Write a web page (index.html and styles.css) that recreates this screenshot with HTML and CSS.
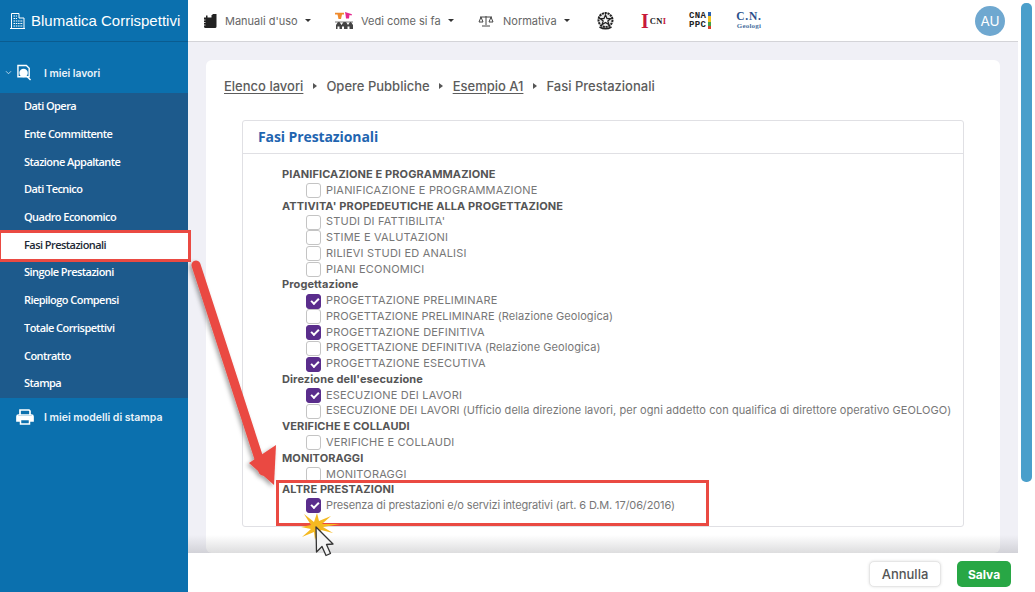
FILE: index.html
```html
<!DOCTYPE html>
<html lang="it">
<head>
<meta charset="utf-8">
<title>Blumatica Corrispettivi</title>
<link rel="stylesheet" href="styles.css">
</head>
<body>
<div class="app">
  <aside class="sidebar">
    <div class="brand">
      <svg class="brand-icon" viewBox="0 0 15 16" width="15" height="16"><path d="M1.500 15.500V.5H9v4.500h5v10.500M0 15.500h15" fill="none" stroke="#fff" stroke-width="1"/><path d="M3.500 3h3.500M3.500 5.500h3.500M3.500 8h9.500M3.500 10.500h9.500M3.500 13h9.500" stroke="#fff" stroke-width="1.200" stroke-dasharray="1.500 .8"/></svg>
      <span>Blumatica Corrispettivi</span>
    </div>
    <div class="nav-top">
      <svg class="chev" viewBox="0 0 8 6" width="7" height="5"><path d="M1 1.500l3 3 3-3" fill="none" stroke="#cfe3f1" stroke-width="1"/></svg>
      <svg class="nav-icon" viewBox="0 0 16 17" width="15" height="17"><path d="M1 1h9l3 3v9H1z" fill="none" stroke="#fff" stroke-width="1.500"/><circle cx="7" cy="9" r="4.500" fill="#fff"/><path d="M10.500 12.500l4 4" stroke="#fff" stroke-width="1.500"/></svg>
      <span>I miei lavori</span>
    </div>
    <nav class="submenu">
      <a>Dati Opera</a>
      <a>Ente Committente</a>
      <a>Stazione Appaltante</a>
      <a>Dati Tecnico</a>
      <a>Quadro Economico</a>
      <a class="active">Fasi Prestazionali</a>
      <a>Singole Prestazioni</a>
      <a>Riepilogo Compensi</a>
      <a>Totale Corrispettivi</a>
      <a>Contratto</a>
      <a>Stampa</a>
    </nav>
    <div class="nav-print">
      <svg viewBox="0 0 18 16" width="18" height="16"><path d="M4 6V1h9l1 1v4M4 12H1V7.500Q1 6 2.500 6h13Q17 6 17 7.500V12h-3" fill="none" stroke="#fff" stroke-width="1.700"/><path d="M1 7h16v5H1z" fill="#fff"/><path d="M4.500 10.500h9v4.500h-9z" fill="#0b70ae" stroke="#fff" stroke-width="1.500"/></svg>
      <span>I miei modelli di stampa</span>
    </div>
  </aside>

  <div class="main">
    <header class="topbar">
      <div class="menu m1">
        <svg viewBox="0 0 14 14" width="14" height="14"><path d="M1 3.500h2V1.500h1.500v2H8.500V1h1v-1L12.500 0H13.500v12.500Q13.500 14 12 14H2.500Q1 14 1 12.500z" fill="#222"/><path d="M.5 6h2M.5 8.500h2M.5 11h2" stroke="#fff" stroke-width=".8"/></svg>
        <span>Manuali d'uso</span><i class="caret"></i>
      </div>
      <div class="menu m2">
        <svg viewBox="0 0 18 17" width="18" height="17"><path d="M0 .8h9v1.700h-2L6 7H3.500L2.500 2.500H0z" fill="#ef8a2d"/><path d="M10 0l7 2.300-.5 1.200-2-.6-.5 3.600h-3L10.500 2.500z" fill="#e4288e"/><path d="M1 17v-4l2-3h1.500l2 3 2-3H11l2 3 2-3h1l2 3v4h-3.500v-2.500h-2V17H9v-2.500H7V17H4.500v-2.500h-2V17z" fill="#444"/><path d="M0 10h18" stroke="#555" stroke-width=".8"/></svg>
        <span>Vedi come si fa</span><i class="caret"></i>
      </div>
      <div class="menu m3">
        <svg viewBox="0 0 16 12" width="16" height="12"><path d="M8 1v9M4 11h8M2 2h12M3 2L1 7h4zM13 2l-2 5h4z" fill="none" stroke="#444" stroke-width="1"/></svg>
        <span>Normativa</span><i class="caret"></i>
      </div>
      <div class="logo emblem">
        <svg viewBox="0 0 17 18" width="17" height="18"><circle cx="8.500" cy="8" r="7" fill="#e6e6e6" stroke="#222" stroke-width="2" stroke-dasharray="2.200 .7"/><path d="M8.500 3l1.500 3.600h3.800l-3 2.300 1.100 3.700-3.400-2.200-3.400 2.200 1.100-3.700-3-2.300H7z" fill="#fff" stroke="#222" stroke-width="1.200"/><path d="M2.500 15q6 3.500 12 0" fill="none" stroke="#222" stroke-width="1.500"/></svg>
      </div>
      <div class="logo cni"><span class="cni-i">I</span><span class="cni-t">CN<em>I</em></span></div>
      <div class="logo cna"><span class="cna-t">CNA<br>PPC</span><span class="cna-bar"></span></div>
      <div class="logo cng"><span class="cng-a">C.N.</span><span class="cng-b">Geologi</span></div>
      <div class="avatar">AU</div>
    </header>

    <div class="content">
      <section class="card">
        <div class="crumbs">
          <a>Elenco lavori</a><i class="sep"></i><span>Opere Pubbliche</span><i class="sep"></i><a>Esempio A1</a><i class="sep"></i><span>Fasi Prestazionali</span>
        </div>
        <div class="panel">
          <h2 class="panel-title">Fasi Prestazionali</h2>
          <div class="panel-body">
            <div class="cat">PIANIFICAZIONE E PROGRAMMAZIONE</div>
            <label class="row caps"><i class="cb"></i>PIANIFICAZIONE E PROGRAMMAZIONE</label>
            <div class="cat">ATTIVITA' PROPEDEUTICHE ALLA PROGETTAZIONE</div>
            <label class="row caps"><i class="cb"></i>STUDI DI FATTIBILITA'</label>
            <label class="row caps"><i class="cb"></i>STIME E VALUTAZIONI</label>
            <label class="row caps"><i class="cb"></i>RILIEVI STUDI ED ANALISI</label>
            <label class="row caps"><i class="cb"></i>PIANI ECONOMICI</label>
            <div class="cat">Progettazione</div>
            <label class="row caps"><i class="cb on"></i>PROGETTAZIONE PRELIMINARE</label>
            <label class="row"><i class="cb"></i>PROGETTAZIONE PRELIMINARE (Relazione Geologica)</label>
            <label class="row caps"><i class="cb on"></i>PROGETTAZIONE DEFINITIVA</label>
            <label class="row"><i class="cb"></i>PROGETTAZIONE DEFINITIVA (Relazione Geologica)</label>
            <label class="row caps"><i class="cb on"></i>PROGETTAZIONE ESECUTIVA</label>
            <div class="cat">Direzione dell'esecuzione</div>
            <label class="row caps"><i class="cb on"></i>ESECUZIONE DEI LAVORI</label>
            <label class="row"><i class="cb"></i>ESECUZIONE DEI LAVORI (Ufficio della direzione lavori, per ogni addetto con qualifica di direttore operativo GEOLOGO)</label>
            <div class="cat">VERIFICHE E COLLAUDI</div>
            <label class="row caps"><i class="cb"></i>VERIFICHE E COLLAUDI</label>
            <div class="cat">MONITORAGGI</div>
            <label class="row caps"><i class="cb"></i>MONITORAGGI</label>
            <div class="cat">ALTRE PRESTAZIONI</div>
            <label class="row tight"><i class="cb on"></i>Presenza di prestazioni e/o servizi integrativi (art. 6 D.M. 17/06/2016)</label>
          </div>
        </div>
      </section>
      <div class="fade"></div>
    </div>

    <footer class="footer">
      <button class="btn cancel">Annulla</button>
      <button class="btn save">Salva</button>
    </footer>
  </div>

  <div class="scrollbar"><div class="thumb"></div></div>
</div>

<div class="mark mark-nav"></div>
<div class="mark mark-row"></div>
<svg class="overlay" viewBox="0 0 1035 592" width="1035" height="592">
  <defs><filter id="sh" x="-20%" y="-20%" width="140%" height="140%"><feDropShadow dx="-2" dy="2" stdDeviation="2" flood-color="#000" flood-opacity=".35"/></filter></defs>
  <g filter="url(#sh)">
    <path d="M196 265L263 471" stroke="#ea4a42" stroke-width="9" stroke-linecap="round" fill="none"/>
    <path d="M249 463L276 445 274 485z" fill="#ea4a42"/>
  </g>
  <path d="M304 514L314 522 317 513 319 521 331 516 322 524 340 524 323 527 333 533 321 530 323 540 318 531 315 540 314 532 302 537 311 529 301 527 311 525z" fill="#f5b921"/>
  <path d="M316 527l.5 25 5.500-5.500 4 9 4.500-2-4-9 6.500-.5z" fill="#f4f4f4" stroke="#333" stroke-width="1.300" stroke-linejoin="round"/>
</svg>
</body>
</html>
```

FILE: styles.css
```css
* { box-sizing: border-box; }
html, body { margin: 0; padding: 0; height: 592px; overflow: hidden; background: #fff; }
body { font-family: "Inter", "Open Sans", sans-serif; color: #555; position: relative; }

.app { display: flex; height: 592px; width: 1035px; }

.sidebar { width: 188px; flex: none; background: #0b70ae; color: #fff; display: flex; flex-direction: column; }
.brand { height: 42px; display: flex; align-items: center; gap: 6px; padding-left: 10px; border-bottom: 1px solid #0a5c90; font: 15px "Liberation Sans", Arial, sans-serif; white-space: nowrap; }
.nav-top { height: 51px; display: flex; align-items: center; padding: 10px 0 0 5px; font: 600 10.300px "Inter", sans-serif; color: #eaf3f9; }
.chev { margin-right: 5px; }
.nav-icon { margin-right: 12px; }
.submenu { background: #1d5a8c; display: flex; flex-direction: column; }
.submenu a { height: 27.700px; display: flex; align-items: center; padding: 0 0 2px 24px; font: 600 11px "Open Sans", sans-serif; letter-spacing: -.55px; color: #fff; }
.submenu a.active { background: #fff; color: #1e2a36; }
.nav-print { display: flex; align-items: center; height: 39px; padding-left: 16px; gap: 10px; font: 600 10.500px "Inter", sans-serif; color: #eaf3f9; }

.main { width: 830px; flex: none; display: flex; flex-direction: column; background: #f0f0f6; }
.topbar { height: 42px; flex: none; background: #fff; border-bottom: 1px solid #d4d4d8; display: flex; align-items: center; padding-left: 15px; position: relative; font-size: 11px; color: #666; }
.menu { display: flex; align-items: center; }
.menu span { white-space: nowrap; }
.m1 { width: 132px; }
.m1 span { margin-left: 8px; }
.m2 { width: 143px; }
.m2 span { margin-left: 8px; }
.m3 { width: 119px; }
.m3 span { margin-left: 9px; }
.caret { width: 0; height: 0; border: 3.500px solid transparent; border-top: 3.500px solid #333; border-bottom: 0; margin-left: 7px; }
.logo { display: flex; align-items: center; }
.emblem { width: 44px; }
.cni { width: 48px; }
.cni-i { font: 700 20px/20px "Liberation Serif", serif; color: #c8193c; margin-right: 1px; }
.cni-t { font: 700 8.500px "Liberation Serif", serif; color: #222; letter-spacing: .3px; }
.cni-t em { font-style: normal; color: #c8193c; }
.cna { width: 48px; gap: 2px; }
.cna-t { font: 700 9px/9px "Liberation Mono", monospace; color: #222; letter-spacing: .3px; }
.cna-bar { width: 3px; height: 17px; background: linear-gradient(#2a62b0 0 25%, #f0c020 25% 60%, #47a040 60% 80%, #d8402a 80%); }
.cng { flex-direction: column; align-items: center; width: 24px; }
.cng-a { font: 700 11.500px/11px "Liberation Serif", serif; color: #2a4f8a; letter-spacing: .8px; }
.cng-b { font: 700 7px/8px "Liberation Serif", serif; color: #4a6fa0; letter-spacing: .2px; }
.avatar { position: absolute; left: 787px; top: 6px; width: 30px; height: 30px; border-radius: 50%; background: #6fa8d0; color: #fff; display: flex; align-items: center; justify-content: center; font-size: 13.500px; }

.content { flex: 1; min-height: 0; padding: 18px 18px 0; position: relative; overflow: hidden; }
.card { background: #fff; border-radius: 6px; height: 100%; padding: 17px 36px 0 18px; }
.crumbs { display: flex; align-items: center; font-size: 13px; font-weight: 500; color: #5c5c5c; height: 18px; white-space: nowrap; }
.crumbs a { text-decoration: underline; text-underline-offset: 2px; }
.sep { width: 0; height: 0; border: 3.500px solid transparent; border-left: 4px solid #555; border-right: 0; margin: 0 9.500px; }
.panel { margin: 25px 0 0 18px; width: 722px; height: 407px; border: 1px solid #e0e0e4; border-radius: 3px; }
.panel-title { margin: 0; height: 33px; padding: 0 0 2px 15px; display: flex; align-items: center; font: 700 14px "Open Sans", sans-serif; letter-spacing: -.1px; color: #1f65b0; border-bottom: 1px solid #e0e0e4; }
.panel-body { padding: 13px 0 0 39px; font-size: 11px; line-height: 15.780px; }
.cat { height: 15.780px; font-weight: 700; letter-spacing: .1px; color: #555; white-space: nowrap; }
.row { height: 15.780px; display: flex; align-items: center; padding-left: 24px; color: #777; letter-spacing: .07px; white-space: nowrap; position: relative; }
.row.caps { letter-spacing: .19px; }
.row.tight { letter-spacing: -.13px; }
.cb { width: 15px; height: 15px; flex: none; border: 1px solid #c4c4c4; border-radius: 3px; background: #fff; margin-right: 5px; position: relative; }
.cb.on { background: #5a2d8c; border-color: #5a2d8c; }
.cb.on::after { content: ""; position: absolute; left: 3.500px; top: 3px; width: 6px; height: 3px; border-left: 2px solid #fff; border-bottom: 2px solid #fff; transform: rotate(-45deg); }
.fade { position: absolute; left: 0; right: 0; bottom: 0; height: 18px; background: linear-gradient(rgba(120,120,125,0), rgba(120,120,125,.25)); }

.footer { height: 39px; flex: none; background: #fff; display: flex; justify-content: flex-end; align-items: center; gap: 16px; padding: 3px 7px 0 0; }
.btn { height: 26px; border-radius: 5px; font: 500 13px "Inter", sans-serif; padding: 0; }
.cancel { width: 72px; background: #fff; border: 1px solid #e6e6e6; color: #555; box-shadow: 0 0 3px rgba(0,0,0,.12); }
.save { width: 54px; background: #28a745; border: 0; color: #fff; font-size: 12px; font-weight: 700; }

.scrollbar { width: 17px; flex: none; background: #fff; padding: 3px 3px 0; }
.thumb { width: 11px; height: 479px; background: #4a9fcb; border-radius: 5px; }

.mark { position: absolute; border: 3px solid #ea4a42; pointer-events: none; }
.mark-nav { left: -2px; top: 230px; width: 193px; height: 32px; }
.mark-row { left: 276px; top: 480px; width: 433px; height: 46px; }
.overlay { position: absolute; left: 0; top: 0; pointer-events: none; }
```
